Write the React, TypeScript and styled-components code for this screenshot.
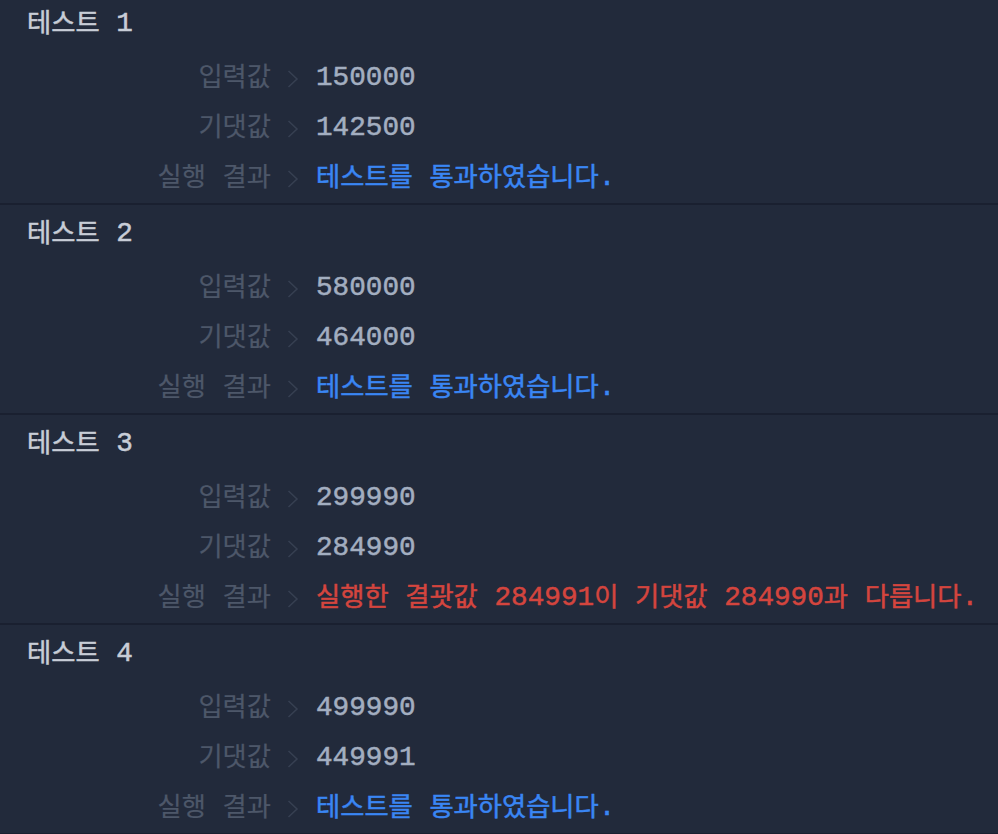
import React from "react";
import styled, { createGlobalStyle } from "styled-components";

const Global = createGlobalStyle`
  html, body { margin: 0; padding: 0; background: #222a3b; }
  body { overflow: hidden; }
`;

const Page = styled.div`
  margin-top: -5px;
  font-family: "Liberation Mono", "Noto Sans CJK KR", monospace;
  font-size: 27.7px;
`;

const Section = styled.section`
  padding-top: 3px;
  border-bottom: 2px solid #1a2030;
`;

const Title = styled.div`
  height: 50px;
  line-height: 52px;
  padding-left: 27px;
  color: #c8cdd7;
  margin-bottom: 5px;
  white-space: pre;
  -webkit-text-stroke: 0.5px currentColor;
`;

const Row = styled.div`
  display: flex;
  align-items: baseline;
  height: 50px;
  line-height: 50px;
  white-space: pre;
`;

const Label = styled.span`
  width: 271px;
  text-align: right;
  color: #4d5769;
  -webkit-text-stroke: 0.2px currentColor;
`;

const ChevronCell = styled.span`
  width: 45px;
  padding-left: 16px;
  box-sizing: border-box;
  svg { vertical-align: -3px; }
`;

const Value = styled.span<{ $tone: "plain" | "pass" | "fail" }>`
  color: ${(p) =>
    p.$tone === "pass" ? "#3a86f4" : p.$tone === "fail" ? "#d4453e" : "#a3aec0"};
  -webkit-text-stroke: 0.5px currentColor;
`;

const Ko = styled.span`
  font-family: "Noto Sans CJK KR", sans-serif;
  font-size: 26.3px;
  line-height: 1;
  vertical-align: -1px;
`;

function T({ text }: { text: string }) {
  const parts = text.split(/([\uAC00-\uD7A3]+)/).filter((s) => s.length > 0);
  return (
    <>
      {parts.map((p, i) =>
        /[\uAC00-\uD7A3]/.test(p) ? <Ko key={i}>{p}</Ko> : <React.Fragment key={i}>{p}</React.Fragment>
      )}
    </>
  );
}

function Chevron() {
  return (
    <ChevronCell>
      <svg width="12" height="18" viewBox="0 0 12 18">
        <path d="M1.5 1 L10 9 L1.5 17" fill="none" stroke="#374052" strokeWidth="1.5" />
      </svg>
    </ChevronCell>
  );
}

type Test = { input: string; expected: string; result: string; pass: boolean };

const tests: Test[] = [
  { input: "150000", expected: "142500", result: "테스트를 통과하였습니다.", pass: true },
  { input: "580000", expected: "464000", result: "테스트를 통과하였습니다.", pass: true },
  {
    input: "299990",
    expected: "284990",
    result: "실행한 결괏값 284991이 기댓값 284990과 다릅니다.",
    pass: false,
  },
  { input: "499990", expected: "449991", result: "테스트를 통과하였습니다.", pass: true },
];

export default function App() {
  return (
    <>
      <Global />
      <Page>
        {tests.map((t, i) => (
          <Section key={i}>
            <Title>
              <T text={`테스트 ${i + 1}`} />
            </Title>
            <Row>
              <Label><T text="입력값" /></Label>
              <Chevron />
              <Value $tone="plain">{t.input}</Value>
            </Row>
            <Row>
              <Label><T text="기댓값" /></Label>
              <Chevron />
              <Value $tone="plain">{t.expected}</Value>
            </Row>
            <Row>
              <Label><T text="실행 결과" /></Label>
              <Chevron />
              <Value $tone={t.pass ? "pass" : "fail"}><T text={t.result} /></Value>
            </Row>
          </Section>
        ))}
      </Page>
    </>
  );
}
